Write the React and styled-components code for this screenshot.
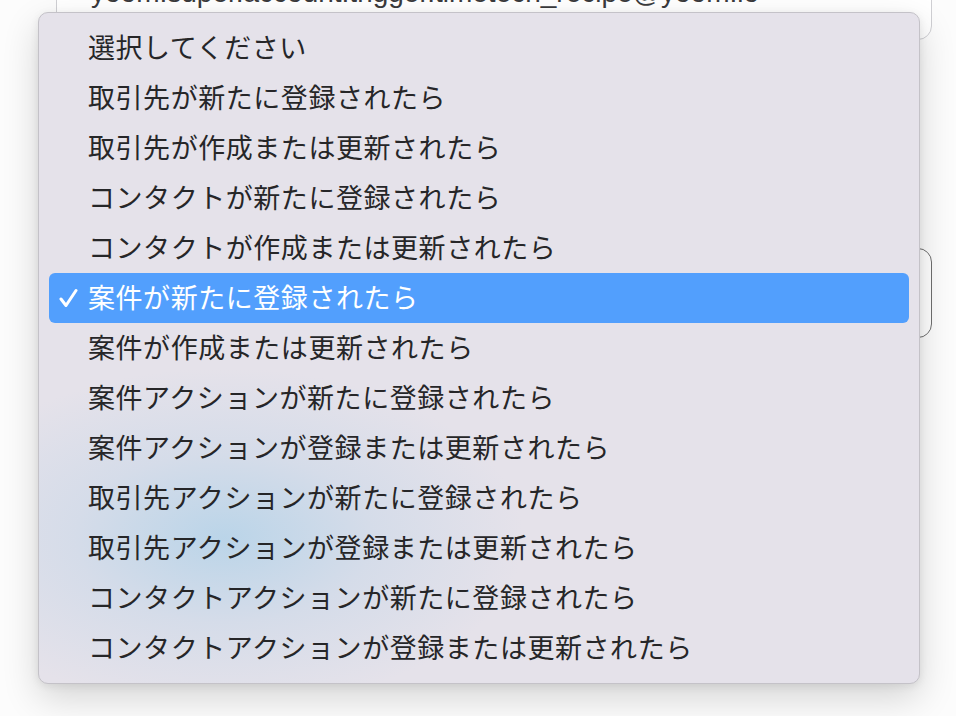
import React from "react";
import styled, { createGlobalStyle } from "styled-components";

const GlobalStyle = createGlobalStyle`
  html, body {
    margin: 0;
    padding: 0;
    background: #fcfcfc;
    overflow: hidden;
  }
  body {
    font-family: "Liberation Sans", "Noto Sans CJK JP", sans-serif;
  }
`;

const Page = styled.div`
  position: relative;
  width: 956px;
  height: 716px;
  overflow: hidden;
`;

const Form = styled.div`
  display: flex;
  flex-direction: column;
  gap: 208px;
  padding: 0 24px 0 56px;
`;

const Field = styled.div`
  display: flex;
  align-items: ${({ $top }) => ($top ? "flex-end" : "center")};
  height: 90px;
  margin-top: ${({ $top }) => ($top ? "-50px" : "0")};
  padding: 0 34px ${({ $top }) => ($top ? "32px" : "0")};
  box-sizing: border-box;
  border: 1.5px solid ${({ $dark }) => ($dark ? "#6f6f6f" : "#cfcfd3")};
  border-radius: 14px;
  background: #fff;
`;

const FieldText = styled.span`
  font-size: 28px;
  line-height: 1;
  color: #3a3a3c;
  white-space: nowrap;
`;

const Menu = styled.ul`
  position: absolute;
  top: 12px;
  left: 38px;
  width: 882px;
  margin: 0;
  padding: 10px;
  box-sizing: border-box;
  list-style: none;
  border: 1px solid #c4c2c8;
  border-radius: 10px;
  background:
    radial-gradient(ellipse 300px 170px at 185px 525px, rgba(172, 208, 232, 0.75), rgba(194, 213, 232, 0.45) 50%, rgba(228, 225, 234, 0) 100%),
    #e5e2ea;
  box-shadow: 0 14px 36px rgba(0, 0, 0, 0.16), 0 2px 8px rgba(0, 0, 0, 0.08);
`;

const Item = styled.li`
  display: flex;
  align-items: center;
  height: 50px;
  padding: 0 0 3px 10px;
  box-sizing: border-box;
  border-radius: 6px;
  font-family: "Noto Sans CJK JP", "Noto Sans", sans-serif;
  font-size: 27px;
  letter-spacing: 0.55px;
  color: ${({ $active }) => ($active ? "#ffffff" : "#262628")};
  background: ${({ $active }) => ($active ? "#529ffd" : "transparent")};
`;

const Check = styled.span`
  display: flex;
  width: 29px;
  padding-top: 3px;
  flex-shrink: 0;
`;

const options = [
  "選択してください",
  "取引先が新たに登録されたら",
  "取引先が作成または更新されたら",
  "コンタクトが新たに登録されたら",
  "コンタクトが作成または更新されたら",
  "案件が新たに登録されたら",
  "案件が作成または更新されたら",
  "案件アクションが新たに登録されたら",
  "案件アクションが登録または更新されたら",
  "取引先アクションが新たに登録されたら",
  "取引先アクションが登録または更新されたら",
  "コンタクトアクションが新たに登録されたら",
  "コンタクトアクションが登録または更新されたら",
];

const selected = 5;

const CheckIcon = () => (
  <svg width="19" height="20" viewBox="0 0 19 20" fill="none">
    <path
      d="M2 11 L7 17.5 L17 2.5"
      stroke="#fff"
      strokeWidth="3"
      strokeLinecap="round"
      strokeLinejoin="round"
    />
  </svg>
);

const App = () => (
  <Page>
    <GlobalStyle />
    <Form>
      <Field $top>
        <FieldText>yoom.super.account.trigger.timetech_recipe@yoom.io</FieldText>
      </Field>
      <Field $dark />
    </Form>
    <Menu>
      {options.map((label, index) => (
        <Item key={index} $active={index === selected}>
          <Check>{index === selected && <CheckIcon />}</Check>
          {label}
        </Item>
      ))}
    </Menu>
  </Page>
);

export default App;
